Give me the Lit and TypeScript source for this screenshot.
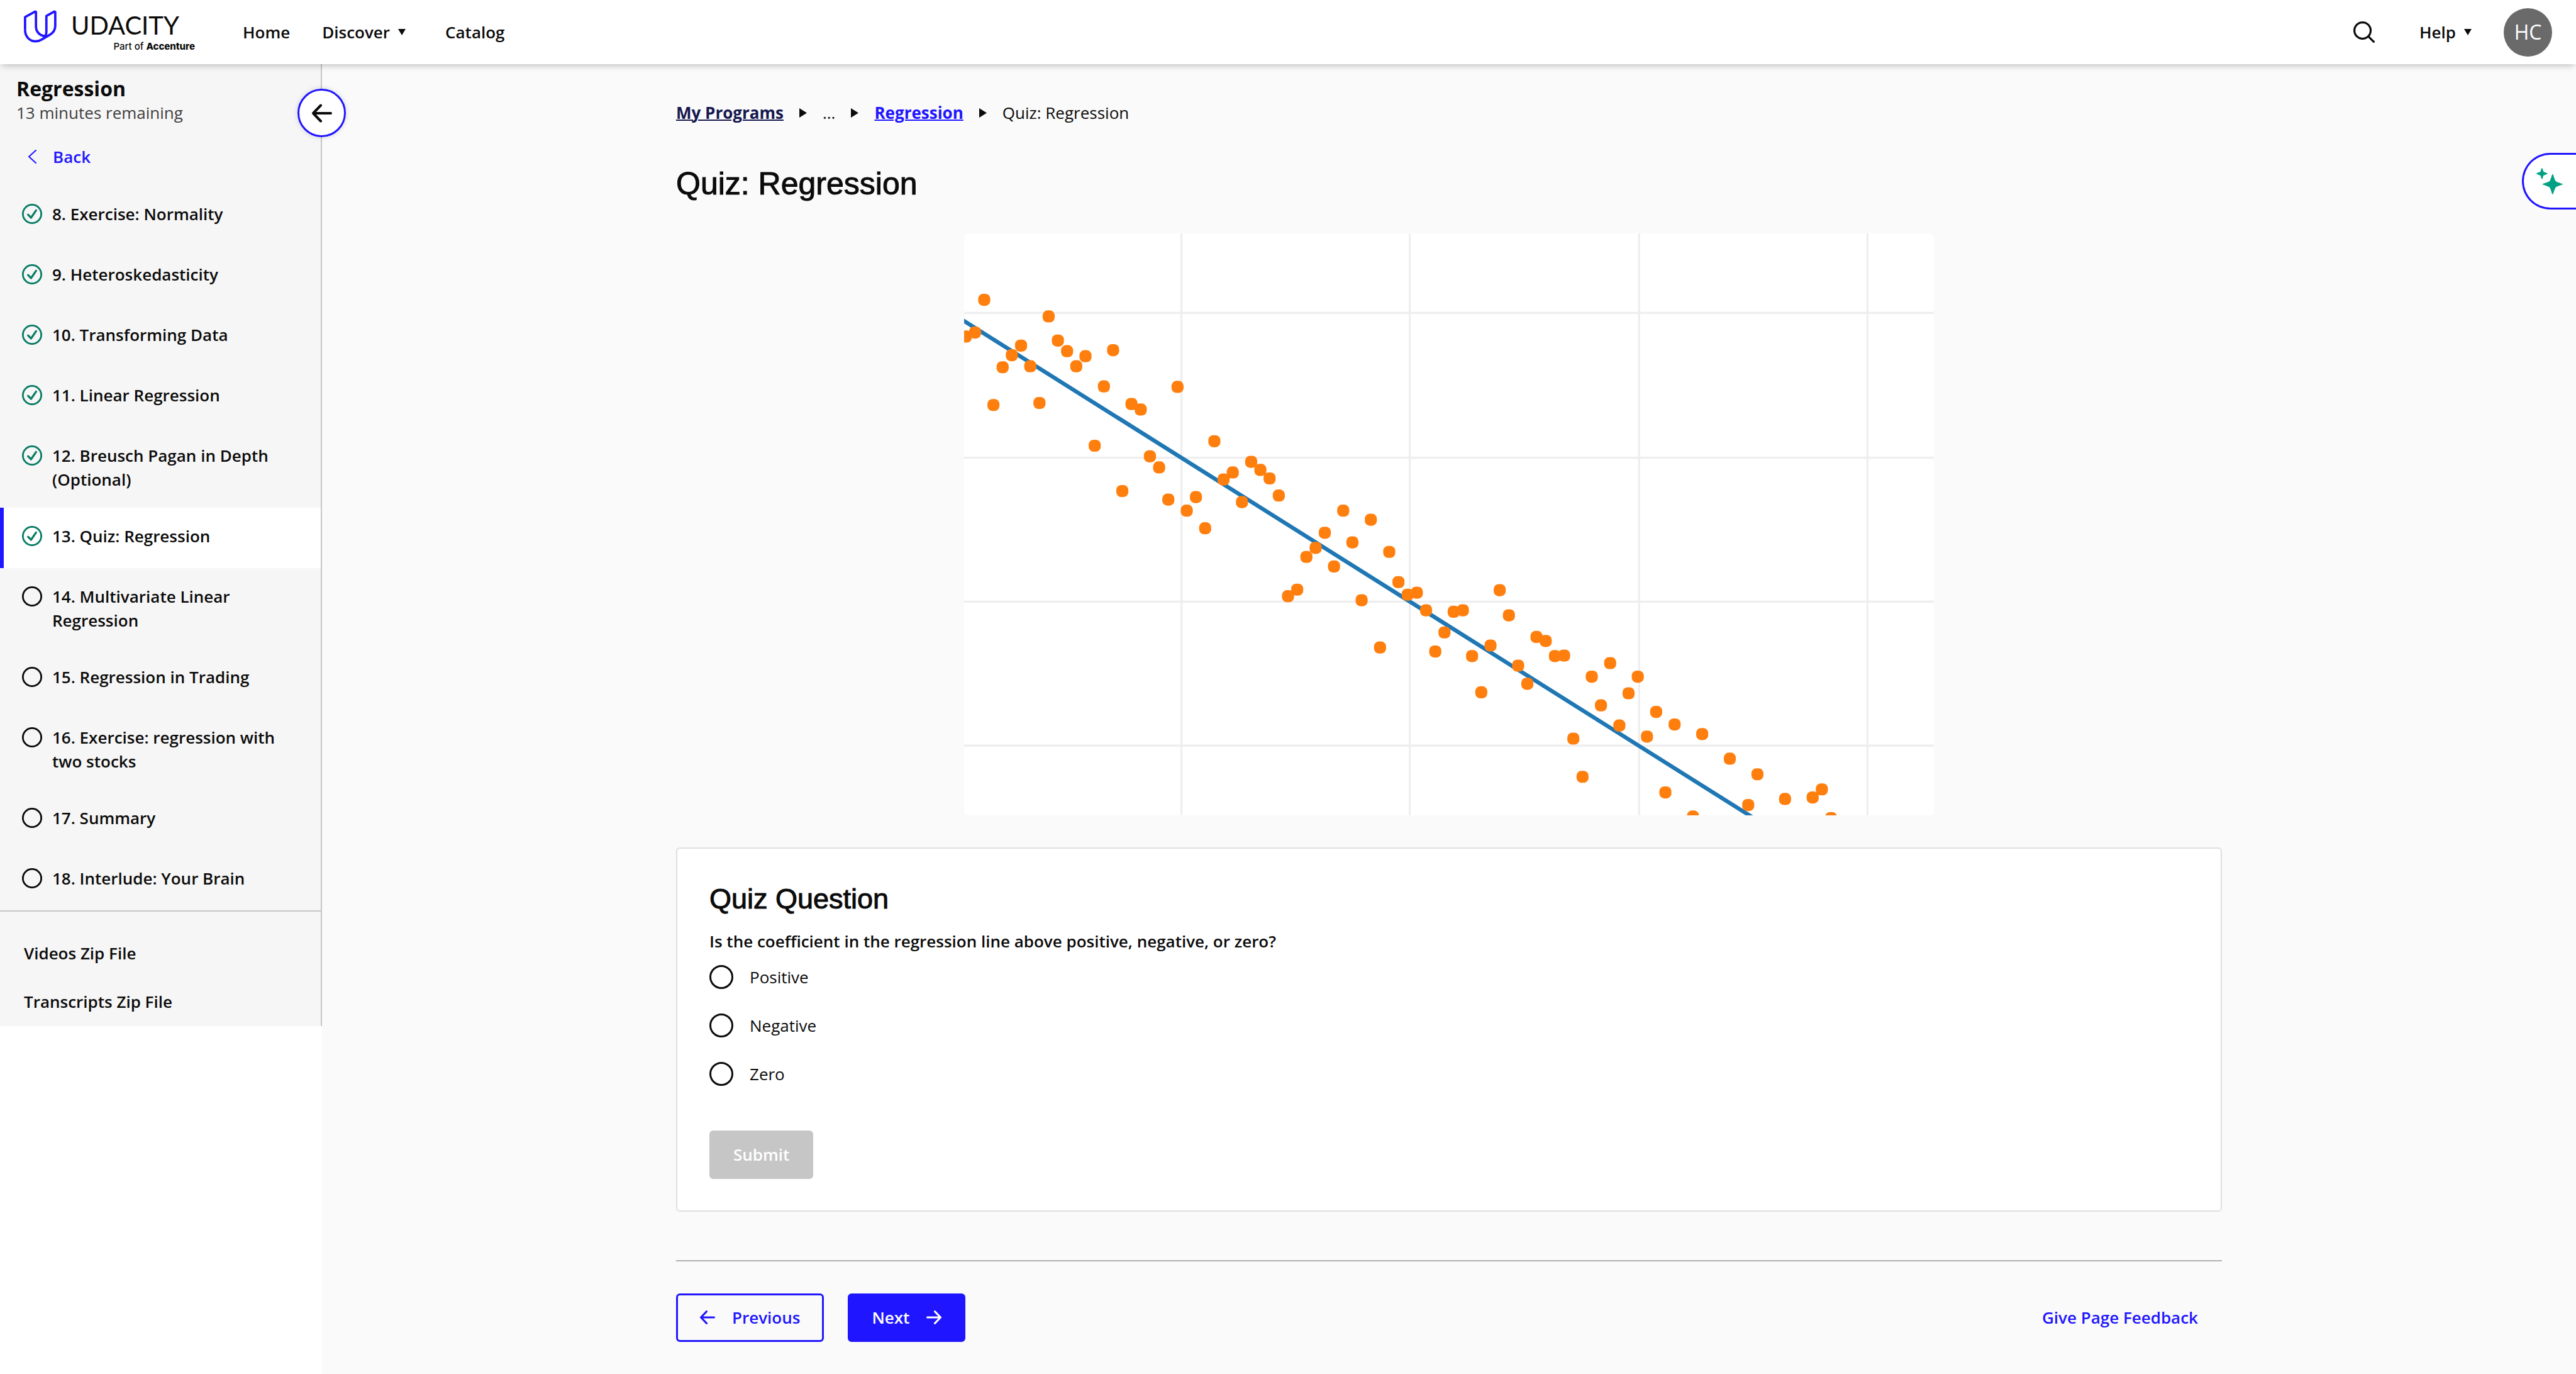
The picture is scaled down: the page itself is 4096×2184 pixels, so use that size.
import { LitElement, html, css, svg, nothing } from "lit";
import { customElement, property, state } from "lit/decorators.js";
import { classMap } from "lit/directives/class-map.js";

interface Lesson {
  label: string;
  done: boolean;
}

const LESSONS: Lesson[] = [
  { label: "8. Exercise: Normality", done: true },
  { label: "9. Heteroskedasticity", done: true },
  { label: "10. Transforming Data", done: true },
  { label: "11. Linear Regression", done: true },
  { label: "12. Breusch Pagan in Depth (Optional)", done: true },
  { label: "13. Quiz: Regression", done: true },
  { label: "14. Multivariate Linear Regression", done: false },
  { label: "15. Regression in Trading", done: false },
  { label: "16. Exercise: regression with two stocks", done: false },
  { label: "17. Summary", done: false },
  { label: "18. Interlude: Your Brain", done: false },
];

const CURRENT = "13. Quiz: Regression";

// Vertical position of each sample; null where the sample lies below the plot.
const SAMPLES: (number | null)[] = [
  205, 197, 132, 341, 266, 242, 223, 264, 337, 165, 213, 234, 264, 244, 422, 304, 232, 512, 339, 350,
  443, 465, 529, 305, 551, 524, 586, 413, 489, 475, 534, 454, 470, 487, 521, 721, 708, 643, 625, 595,
  662, 551, 614, 729, 569, 823, 633, 693, 718, 714, 749, 831, 793, 752, 749, 840, 912, 819, 709, 759,
  859, 895, 802, 810, 840, 839, 1004, 1080, 881, 938, 854, 978, 914, 881, 1000, 951, 1111, 976, null, 1159,
  995, null, null, 1044, null, 1136, 1075, null, null, 1124, null, null, 1121, 1105, 1162,
];

const SAMPLE_START = 3.4;
const SAMPLE_STEP = 18.3;

const base = css`
  *,
  *::before,
  *::after {
    box-sizing: border-box;
  }
  a {
    color: inherit;
    text-decoration: none;
  }
  button {
    margin: 0;
    padding: 0;
    border: 0;
    background: none;
    color: inherit;
    font: inherit;
    cursor: pointer;
  }
  svg {
    display: block;
    flex: none;
  }
  h1,
  h2,
  p,
  ul,
  ol {
    margin: 0;
    padding: 0;
    list-style: none;
  }
`;

const caret = html`<svg width="12" height="10" viewBox="0 0 12 10" aria-hidden="true">
  <path d="M0 0H12L6 10Z" fill="currentColor" />
</svg>`;

const arrow = (size: number, right = false) => html`<svg
  width=${size}
  height=${size}
  viewBox="0 0 32 32"
  fill="none"
  stroke="currentColor"
  stroke-width="4"
  stroke-linecap="round"
  stroke-linejoin="round"
  aria-hidden="true"
>
  ${right ? svg`<path d="M2 16H30M18 3.500L30 16L18 28.500" />` : svg`<path d="M30 16H2M14 3.500L2 16L14 28.500" />`}
</svg>`;

@customElement("site-header")
export class SiteHeader extends LitElement {
  static styles = [
    base,
    css`
      :host {
        display: block;
        position: relative;
        z-index: 2;
        background: #fff;
        box-shadow: 0 5px 10px -3px rgba(0, 0, 0, 0.25);
      }
      .bar {
        display: flex;
        align-items: center;
        justify-content: space-between;
        height: 102px;
        padding: 0 38px;
        font-weight: 600;
      }
      .group {
        display: flex;
        align-items: center;
      }
      .logo {
        display: flex;
        gap: 23px;
        height: 70px;
        margin-right: 76px;
        color: #0b0b0b;
      }
      .lockup {
        display: flex;
        flex-direction: column;
        gap: 8px;
        min-width: 197px;
        padding-top: 8px;
      }
      .wordmark {
        font: 400 40px/32px Lato, sans-serif;
      }
      .tagline {
        font: 500 15px/20px Inter, sans-serif;
        text-align: right;
      }
      .tagline b {
        font-weight: 800;
      }
      .nav {
        gap: 51px;
      }
      .menu {
        display: flex;
        align-items: center;
        gap: 13px;
      }
      .nav .menu {
        margin-right: 12px;
      }
      .search {
        margin-right: 71px;
      }
      .avatar {
        width: 77px;
        height: 77px;
        margin-left: 51px;
        border-radius: 50%;
        background: #6a6a6a;
        color: #fff;
        font-size: 32px;
        font-weight: 400;
      }
    `,
  ];

  render() {
    return html`<header class="bar">
      <div class="group">
        <a class="logo" href="#home">
          <svg width="52" height="52" viewBox="54 31 195 194" fill="none" stroke="#2015ff" stroke-width="14" stroke-linejoin="round" aria-hidden="true">
            <path d="M61 150V72L121 39L126 42V128C126 160 148 183 180 186" />
            <path d="M61 150C61 190 90 217 123 217C140 217 150 212 160 206L205 180C230 166 241 150 241 125V42L235 39L188 66V158C188 175 183 190 172 198" />
          </svg>
          <span class="lockup">
            <span class="wordmark">UDACITY</span>
            <span class="tagline">Part of <b>Accenture</b></span>
          </span>
        </a>
        <nav class="group nav">
          <a href="#home">Home</a>
          <button class="menu" type="button">Discover ${caret}</button>
          <a href="#catalog">Catalog</a>
        </nav>
      </div>
      <div class="group">
        <button class="search" type="button" aria-label="Search">
          <svg width="34" height="34" viewBox="0 0 42 42" fill="none" stroke="#0b0b0b" stroke-width="4" stroke-linecap="round" aria-hidden="true">
            <circle cx="18" cy="18" r="16" />
            <path d="M30 30L40 40" />
          </svg>
        </button>
        <button class="menu" type="button">Help ${caret}</button>
        <button class="avatar" type="button">HC</button>
      </div>
    </header>`;
  }
}

@customElement("lesson-sidebar")
export class LessonSidebar extends LitElement {
  static styles = [
    base,
    css`
      :host {
        display: block;
        position: relative;
        flex: 0 0 512px;
        align-self: flex-start;
        border-right: 2px solid #c6c6c6;
        background: #f6f6f6;
      }
      .heading {
        padding: 20px 26px 0;
      }
      .title {
        font-size: 32px;
        line-height: 38px;
        font-weight: 700;
      }
      .remaining {
        color: #404040;
      }
      .back {
        display: flex;
        align-items: center;
        gap: 26px;
        margin: 32px 0 27px 45px;
        color: #2015ff;
        font-weight: 600;
      }
      .lesson {
        display: flex;
        align-items: flex-start;
        gap: 16px;
        min-height: 96px;
        padding: 26px 64px 26px 29px;
        border-left: 6px solid transparent;
        font-weight: 600;
      }
      .lesson svg {
        margin-top: 3px;
      }
      .current {
        border-left-color: #2015ff;
        background: #fff;
      }
      .files {
        display: flex;
        flex-direction: column;
        gap: 39px;
        padding: 47px 38px 20px;
        border-top: 2px solid #c6c6c6;
        font-weight: 600;
      }
      .collapse {
        position: absolute;
        top: 39px;
        right: -40px;
        display: flex;
        align-items: center;
        justify-content: center;
        width: 77px;
        height: 77px;
        border: 3px solid #2015ff;
        border-radius: 50%;
        background: #fff;
        box-shadow: 0 0 8px rgba(0, 0, 0, 0.15);
      }
    `,
  ];

  private status(done: boolean) {
    return html`<svg width="32" height="32" viewBox="0 0 40 40" fill="none" stroke=${done ? "#087c65" : "#0b0b0b"} aria-hidden="true">
      <circle cx="20" cy="20" r="18.300" stroke-width="3.500" />
      ${done ? svg`<path d="M12 21.500L18 27.500L28 13" stroke-width="4" stroke-linecap="round" stroke-linejoin="round" />` : nothing}
    </svg>`;
  }

  render() {
    return html`<aside>
      <button class="collapse" type="button" aria-label="Collapse">${arrow(32)}</button>
      <div class="heading">
        <h2 class="title">Regression</h2>
        <p class="remaining">13 minutes remaining</p>
      </div>
      <a class="back" href="#back">
        <svg width="13" height="22" viewBox="0 0 13 22" fill="none" stroke="currentColor" stroke-width="2" stroke-linecap="round" stroke-linejoin="round" aria-hidden="true">
          <path d="M12 1L1 11L12 21" />
        </svg>
        Back
      </a>
      <ol>
        ${LESSONS.map(
          (l) => html`<li>
            <a class=${classMap({ lesson: true, current: l.label === CURRENT })} href="#lesson">
              ${this.status(l.done)}<span>${l.label}</span>
            </a>
          </li>`
        )}
      </ol>
      <div class="files">
        <a href="#videos">Videos Zip File</a>
        <a href="#transcripts">Transcripts Zip File</a>
      </div>
    </aside>`;
  }
}

@customElement("scatter-plot")
export class ScatterPlot extends LitElement {
  @property({ attribute: false }) samples: (number | null)[] = [];

  static styles = [
    base,
    css`
      :host {
        display: block;
      }
      .plot {
        width: 100%;
        height: auto;
        border-radius: 6px;
        background: #fff;
      }
    `,
  ];

  render() {
    return html`<svg class="plot" viewBox="0 0 1928 1156" role="img">
      <g stroke="#eee" stroke-width="4">
        ${[432, 886, 1342, 1796].map((x) => svg`<line x1=${x} y1="0" x2=${x} y2="1156" />`)}
        ${[158, 446, 732, 1018].map((y) => svg`<line x1="0" y1=${y} x2="1928" y2=${y} />`)}
      </g>
      <line x1="-16" y1="164" x2="1600" y2="1181" stroke="#1f77b4" stroke-width="8" />
      <g fill="#ff7f0e">
        ${this.samples.map((y, i) =>
          y === null
            ? nothing
            : svg`<rect x=${SAMPLE_START + i * SAMPLE_STEP - 12} y=${y - 12} width="24" height="24" rx="10" />`
        )}
      </g>
    </svg>`;
  }
}

@customElement("quiz-card")
export class QuizCard extends LitElement {
  @state() private answer = "";

  static styles = [
    base,
    css`
      :host {
        display: block;
      }
      .card {
        display: flex;
        flex-direction: column;
        align-items: flex-start;
        padding: 51px 51px 50px;
        border: 2px solid #dfdfdf;
        border-radius: 6px;
        background: #fff;
      }
      .title {
        margin-bottom: 19px;
        font: 400 45px/58px "Liberation Sans", sans-serif;
        -webkit-text-stroke: 1px currentColor;
      }
      .choices {
        display: flex;
        flex-direction: column;
        gap: 39px;
        margin: 0;
        padding: 0;
        border: 0;
      }
      .question {
        margin-bottom: 19px;
        padding: 0;
        font-weight: 600;
      }
      .choice {
        display: flex;
        align-items: center;
        gap: 26px;
      }
      .radio {
        appearance: none;
        width: 38px;
        height: 38px;
        margin: 0;
        border: 3px solid #0b0b0b;
        border-radius: 50%;
        background: #fff;
      }
      .radio:checked {
        border: 11px solid #2015ff;
      }
      .submit {
        height: 77px;
        margin-top: 71px;
        padding: 0 38px;
        border-radius: 6px;
        background: #2015ff;
        color: #fff;
        font-weight: 600;
      }
      .submit:disabled {
        background: #c6c6c6;
      }
    `,
  ];

  render() {
    return html`<form class="card" @submit=${(e: Event) => e.preventDefault()}>
      <h2 class="title">Quiz Question</h2>
      <fieldset class="choices">
        <legend class="question">Is the coefficient in the regression line above positive, negative, or zero?</legend>
        ${["Positive", "Negative", "Zero"].map(
          (c) => html`<label class="choice">
            <input class="radio" type="radio" name="answer" value=${c} @change=${() => (this.answer = c)} />
            ${c}
          </label>`
        )}
      </fieldset>
      <button class="submit" type="submit" ?disabled=${!this.answer}>Submit</button>
    </form>`;
  }
}

@customElement("app-root")
export class AppRoot extends LitElement {
  static styles = [
    base,
    css`
      :host {
        display: block;
        position: relative;
        min-height: 100vh;
        overflow: hidden;
        background: #fff;
        color: #0b0b0b;
        font-family: "Open Sans", "Noto Sans", sans-serif;
        font-size: 26px;
        line-height: 38px;
      }
      .body {
        display: flex;
      }
      .main {
        flex: 1;
        min-width: 0;
        padding: 58px 51px 51px;
        background: #fafafa;
      }
      .content {
        max-width: 2458px;
        margin: 0 auto;
      }
      .crumbs {
        display: flex;
        align-items: center;
        gap: 25px;
        margin-bottom: 62px;
      }
      .crumb {
        color: #2015ff;
        font-weight: 700;
        text-decoration: underline;
        text-decoration-thickness: 2px;
      }
      .root {
        color: #15174f;
      }
      .title {
        margin-bottom: 47px;
        font: 400 50px/64px "Liberation Sans", sans-serif;
        -webkit-text-stroke: 1px currentColor;
      }
      .figure {
        max-width: 1542px;
        margin: 0 auto 51px;
      }
      .pager {
        display: flex;
        gap: 38px;
        align-items: center;
        margin-top: 77px;
        padding-top: 51px;
        border-top: 2px solid #b0b0b0;
        font-weight: 600;
      }
      .button {
        display: flex;
        align-items: center;
        gap: 27px;
        height: 77px;
        padding: 0 35px;
        border: 3px solid #2015ff;
        border-radius: 6px;
        color: #2015ff;
      }
      .primary {
        background: #2015ff;
        color: #fff;
      }
      .feedback {
        margin-left: auto;
        padding: 0 38px;
        color: #2015ff;
      }
      .assistant {
        position: absolute;
        top: 243px;
        right: 0;
        display: flex;
        align-items: center;
        width: 86px;
        height: 90px;
        padding-left: 20px;
        border: 3px solid #2015ff;
        border-right: 0;
        border-radius: 45px 0 0 45px;
        background: #fff;
      }
    `,
  ];

  render() {
    const separator = html`<svg width="12" height="15" viewBox="0 0 12 15" aria-hidden="true">
      <path d="M0 0L12 7.500L0 15Z" fill="currentColor" />
    </svg>`;
    return html`
      <site-header></site-header>
      <div class="body">
        <lesson-sidebar></lesson-sidebar>
        <main class="main">
          <div class="content">
            <nav class="crumbs">
              <a class="crumb root" href="#programs">My Programs</a>
              ${separator}
              <span>...</span>
              ${separator}
              <a class="crumb" href="#regression">Regression</a>
              ${separator}
              <span>Quiz: Regression</span>
            </nav>
            <h1 class="title">Quiz: Regression</h1>
            <div class="figure"><scatter-plot .samples=${SAMPLES}></scatter-plot></div>
            <quiz-card></quiz-card>
            <div class="pager">
              <button class="button" type="button">${arrow(24)} Previous</button>
              <button class="button primary" type="button">Next ${arrow(24, true)}</button>
              <a class="feedback" href="#feedback">Give Page Feedback</a>
            </div>
          </div>
        </main>
      </div>
      <button class="assistant" type="button" aria-label="Assistant">
        <svg width="42" height="42" viewBox="0 0 52 52" fill="#02a184" aria-hidden="true">
          <path d="M11 0C12 0 12.500 3 14 7C15 8.500 22 9.500 22 11C22 12.500 15 13.500 14 15C12.500 19 12 22 11 22C10 22 9.500 19 8 15C7 13.500 0 12.500 0 11C0 9.500 7 8.500 8 7C9.500 3 10 0 11 0Z" />
          <path d="M32 12C33.500 12 34.500 20 38 26C44 29.500 52 30.500 52 32C52 33.500 44 34.500 38 38C34.500 44 33.500 52 32 52C30.500 52 29.500 44 26 38C20 34.500 12 33.500 12 32C12 30.500 20 29.500 26 26C29.500 20 30.500 12 32 12Z" />
        </svg>
      </button>
    `;
  }
}
